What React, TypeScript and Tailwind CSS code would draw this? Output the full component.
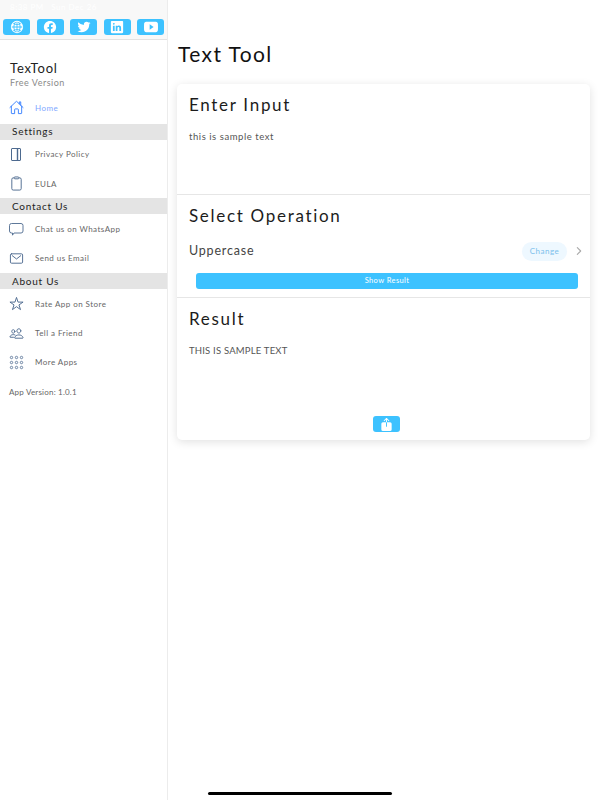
import type { ReactNode } from 'react';
import {
  IoHomeOutline,
  IoClipboardOutline,
  IoMailOutline,
  IoStarOutline,
  IoPeopleOutline,
  IoGlobe,
  IoLogoFacebook,
  IoLogoTwitter,
  IoLogoLinkedin,
  IoLogoYoutube,
  IoShare,
  IoChevronForward,
} from 'react-icons/io5';

function SocialButton({ children }: { children: ReactNode }) {
  return (
    <div className="w-[27px] h-4 rounded-[3px] bg-[#3dc2ff] flex items-center justify-center text-white text-[14px]">
      {children}
    </div>
  );
}

function MenuRow({ icon, label, active }: { icon: ReactNode; label: string; active?: boolean }) {
  return (
    <div className="h-[29.33px] flex items-center pl-[9px]">
      <div className={`w-[26px] text-[15px] ${active ? 'text-[#3880ff]' : 'text-[#4d6a8f]'}`}>{icon}</div>
      <span className={`text-[8px] font-normal tracking-[0.45px] ${active ? 'text-[#7fa8ff]' : 'text-[#666666]'}`}>{label}</span>
    </div>
  );
}

function SectionHeader({ label }: { label: string }) {
  return (
    <div className="h-4 bg-[#e4e4e4] pl-3 flex items-center text-[10px] font-normal tracking-[0.75px] text-[#222222]">{label}</div>
  );
}

function BookIcon() {
  return (
    <svg width="15" height="15" viewBox="0 0 15 15" fill="none" stroke="currentColor">
      <rect x="2.5" y="1.5" width="9" height="12" rx="0.5" />
      <path d="M8.5 1.5v12" strokeWidth="1.4" />
    </svg>
  );
}

function ChatIcon() {
  return (
    <svg width="15" height="15" viewBox="0 0 15 15" fill="none" stroke="currentColor" strokeWidth="0.9">
      <path d="M2.5 1.5h9.5a2 2 0 0 1 2 2v5.5a2 2 0 0 1-2 2H5l-1.5 2.2V11H2.5a2 2 0 0 1-2-2V3.5a2 2 0 0 1 2-2z" />
    </svg>
  );
}

function DotsIcon() {
  return (
    <svg width="15" height="15" viewBox="0 0 15 15" fill="none" stroke="currentColor" strokeWidth="0.8">
      {[2.5, 7.5, 12.5].map((y) =>
        [2.5, 7.5, 12.5].map((x) => <circle key={`${x}-${y}`} cx={x} cy={y} r="1.2" />),
      )}
    </svg>
  );
}

export default function App() {
  return (
    <div className="font-['Lato',sans-serif] font-light relative w-[600px] h-[800px] bg-white flex overflow-hidden">
      {/* Side menu */}
      <aside className="w-[168px] shrink-0 border-r border-[#ececec] flex flex-col">
        <div className="h-10 bg-[#f8f8f8] border-b border-[#e2e2e2] shrink-0">
          <div className="h-[19px] pl-[10px] pt-[1px] text-[8px] leading-[12px] font-normal tracking-[0.5px] text-white">
            8:38 PM&nbsp;&nbsp;&nbsp;Sun Dec 26
          </div>
          <div className="flex justify-between px-[3px]">
            <SocialButton>
              <IoGlobe />
            </SocialButton>
            <SocialButton>
              <IoLogoFacebook />
            </SocialButton>
            <SocialButton>
              <IoLogoTwitter />
            </SocialButton>
            <SocialButton>
              <IoLogoLinkedin />
            </SocialButton>
            <SocialButton>
              <IoLogoYoutube />
            </SocialButton>
          </div>
        </div>

        <div className="pl-[10px] pt-5">
          <div className="text-[13px] leading-4 tracking-[0.8px] font-normal text-[#222222]">TexTool</div>
          <div className="text-[9px] leading-3 mt-[1px] tracking-[0.5px] font-normal text-[#8a8a8a]">Free Version</div>
        </div>
        <div className="mt-[4px]">
          <MenuRow active icon={<IoHomeOutline />} label="Home" />
        </div>
        <div className="mt-[1.5px]">
          <SectionHeader label="Settings" />
          <MenuRow icon={<BookIcon />} label="Privacy Policy" />
          <MenuRow icon={<IoClipboardOutline />} label="EULA" />
          <SectionHeader label="Contact Us" />
          <MenuRow icon={<ChatIcon />} label="Chat us on WhatsApp" />
          <MenuRow icon={<IoMailOutline />} label="Send us Email" />
          <SectionHeader label="About Us" />
          <MenuRow icon={<IoStarOutline />} label="Rate App on Store" />
          <MenuRow icon={<IoPeopleOutline />} label="Tell a Friend" />
          <MenuRow icon={<DotsIcon />} label="More Apps" />
        </div>
        <div className="pl-[9px] mt-[9px] text-[8px] leading-3 tracking-[0.2px] font-normal text-[#666666]">App Version: 1.0.1</div>
      </aside>

      {/* Main content */}
      <main className="flex-1 min-w-0 pl-[9px] pr-[10px]">
        <h1 className="h-[84px] pt-[41px] pl-[1px] text-[21px] leading-[26px] tracking-[1.4px] font-normal text-[#111111]">Text Tool</h1>
        <div className="h-[356px] rounded-[5px] bg-white shadow-[0_2px_10px_rgba(0,0,0,0.12)] flex flex-col">
          <section className="h-[111px] border-b border-[#e6e6e6] px-3 pt-[11px] shrink-0">
            <h2 className="text-[17px] leading-5 tracking-[1.7px] font-normal text-[#1c1c1c]">Enter Input</h2>
            <p className="mt-[16px] text-[9.5px] leading-3 tracking-[0.55px] font-normal text-[#555555]">this is sample text</p>
          </section>

          <section className="h-[103px] border-b border-[#e6e6e6] pt-[11px] shrink-0">
            <h2 className="px-3 text-[17px] leading-5 tracking-[1.7px] font-normal text-[#1c1c1c]">Select Operation</h2>
            <div className="mt-[15px] h-5 pl-3 pr-[5px] flex items-center">
              <span className="flex-1 text-[12.5px] tracking-[0.8px] font-normal text-[#444444]">Uppercase</span>
              <span className="w-[45px] h-[19px] rounded-full bg-[#eef8ff] flex items-center justify-center text-[8px] font-normal tracking-[0.5px] text-[#7cc0ec]">
                Change
              </span>
              <IoChevronForward className="ml-[6px] text-[12px] text-[#aaaaaa]" />
            </div>
            <div className="mt-[12px] ml-[19px] mr-3 h-4 rounded-[3px] bg-[#3dc2ff] flex items-center justify-center text-[7.5px] font-normal tracking-[0.4px] text-white">
              Show Result
            </div>
          </section>

          <section className="flex-1 px-3 pt-[11px] flex flex-col">
            <h2 className="text-[17px] leading-5 tracking-[1.7px] font-normal text-[#1c1c1c]">Result</h2>
            <p className="mt-[16px] text-[9.5px] leading-3 tracking-[0.2px] font-normal text-[#555555]">THIS IS SAMPLE TEXT</p>
            <div className="mt-[59px] ml-[6px] self-center w-[27px] h-4 rounded-[3px] bg-[#3dc2ff] flex items-center justify-center text-white text-[15px]">
              <IoShare />
            </div>
          </section>
        </div>
      </main>

      {/* iOS home indicator */}
      <div className="absolute left-[208px] top-[792px] w-[184px] h-[3px] rounded-full bg-black" />
    </div>
  );
}
